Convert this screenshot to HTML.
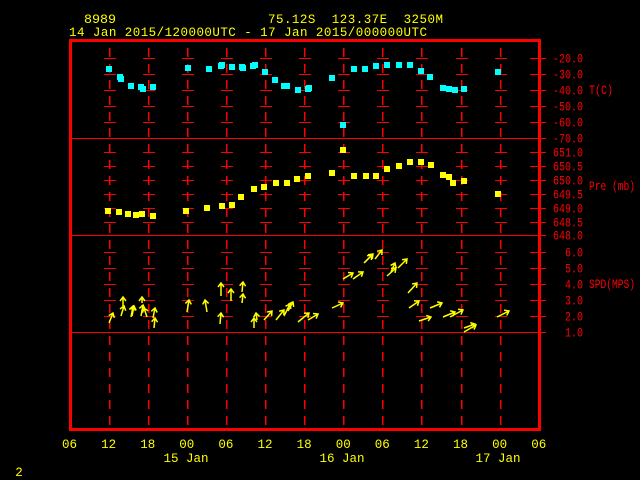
<!DOCTYPE html>
<html><head><meta charset="utf-8"><style>
html,body{margin:0;padding:0;background:#000;width:640px;height:480px;overflow:hidden}
svg{display:block}
text{font-family:"Liberation Mono",monospace}
</style></head><body>
<svg width="640" height="480" viewBox="0 0 640 480" xmlns="http://www.w3.org/2000/svg" shape-rendering="crispEdges">
<g fill="#ffff00" font-size="12.5">
<text x="84" y="23" textLength="32" lengthAdjust="spacingAndGlyphs">8989</text>
<text x="268" y="23" textLength="175" lengthAdjust="spacing" xml:space="preserve">75.12S  123.37E  3250M</text>
<text x="69" y="36" textLength="358" lengthAdjust="spacing">14 Jan 2015/120000UTC - 17 Jan 2015/000000UTC</text>
</g>
<g id="grid" stroke="#ff0000" stroke-width="1"></g>
<rect x="70.5" y="40.5" width="469" height="389" fill="none" stroke="#ff0000" stroke-width="3"/>
<g stroke="#ff0000" stroke-width="1">
<line x1="70" y1="138.5" x2="546" y2="138.5"/>
<line x1="70" y1="235.5" x2="546" y2="235.5"/>
<line x1="70" y1="332.5" x2="546" y2="332.5"/>
</g>
<g fill="#ff0000" font-size="12.5" text-anchor="end" id="lbl"></g>
<g fill="#ff0000" font-size="12.5">
<text x="589" y="94" textLength="24" lengthAdjust="spacingAndGlyphs">T(C)</text>
<text x="589" y="190" textLength="46" lengthAdjust="spacingAndGlyphs">Pre (mb)</text>
<text x="589" y="288" textLength="46" lengthAdjust="spacingAndGlyphs">SPD(MPS)</text>
</g>
<g fill="#ffff00" font-size="12.5" text-anchor="middle" id="xl"></g>
<g fill="#ffff00" font-size="12.5" text-anchor="middle">
<text x="186" y="462">15 Jan</text>
<text x="342" y="462">16 Jan</text>
<text x="498" y="462">17 Jan</text>
<text x="19" y="476">2</text>
</g>
<g id="tp" fill="#00ffff"></g>
<g id="pp" fill="#ffff00"></g>
<g id="wind" stroke="#ffff00" stroke-width="1.5" fill="none" shape-rendering="auto"></g>
</svg>
<script>
var NS="http://www.w3.org/2000/svg";
function el(p,t,a){var e=document.createElementNS(NS,t);for(var k in a)e.setAttribute(k,a[k]);document.getElementById(p).appendChild(e);return e;}
var levels=[58,74,90,106,122,138,152,166,180,194,208,222,235,252,268,284,300,316,332];
var labs=["-20.0","-30.0","-40.0","-50.0","-60.0","-70.0","651.0","650.5","650.0","649.5","649.0","648.5","648.0","6.0","5.0","4.0","3.0","2.0","1.0"];
for(var i=0;i<13;i++){
 var x=Math.round(69.5+39.1*i);
 if(i>0&&i<12){
  for(var y=48;y<424;y+=16){el("grid","rect",{x:x,y:y,width:1.5,height:9,fill:"#ff0000",stroke:"none"});}
  levels.forEach(function(l){el("grid","line",{x1:x-5,y1:l+0.5,x2:x+7,y2:l+0.5});});
 }
}
levels.forEach(function(l,j){el("grid","line",{x1:530,y1:l+0.5,x2:546,y2:l+0.5});
 var t=el("lbl","text",{x:583,y:l+4.5,textLength:labs[j].length*6,lengthAdjust:"spacingAndGlyphs"});t.textContent=labs[j];});
var xl=["06","12","18","00","06","12","18","00","06","12","18","00","06"];
xl.forEach(function(s,i){var t=el("xl","text",{x:69.5+39.1*i,y:448});t.textContent=s;});
var T=[[109,69],[120,77],[121,79],[131,86],[141,87],[143,89],[153,87],[188,68],[209,69],[221,66],[222,65],[232,67],[242,67],[243,68],[253,66],[255,65],[265,72],[275,80],[284,86],[287,86],[298,90],[308,89],[309,88],[332,78],[343,125],[354,69],[365,69],[376,66],[387,65],[399,65],[410,65],[421,71],[430,77],[443,88],[449,89],[455,90],[464,89],[498,72]];
T.forEach(function(p){el("tp","rect",{x:p[0]-3,y:p[1]-3,width:6,height:6});});
var P=[[108,211],[119,212],[128,214],[136,215],[142,214],[153,216],[186,211],[207,208],[222,206],[232,205],[241,197],[254,189],[264,187],[276,183],[287,183],[297,179],[308,176],[332,173],[343,150],[354,176],[366,176],[376,176],[387,169],[399,166],[410,162],[421,162],[431,165],[443,175],[449,177],[453,183],[464,181],[498,194]];
P.forEach(function(p){el("pp","rect",{x:p[0]-3,y:p[1]-3,width:6,height:6});});
var W=[[109,323,113,313],[121,316,124,306],[123,306,123,297],[131,317,133,306],[132,316,134,306],[141,316,143,305],[142,303,142,297],[147,317,144,308],[154,328,155,318],[153,318,155,308],[187,312,189,300],[207,312,205,300],[220,324,221,313],[221,296,221,283],[231,301,231,289],[242,303,243,294],[242,292,243,282],[254,328,254,318],[257,320,256,313],[264,320,272,311],[276,320,284,310],[284,316,290,304],[288,311,293,302],[298,322,309,313],[308,320,318,314],[332,308,343,303],[343,279,353,273],[353,279,363,272],[364,263,373,254],[365,262,372,255],[375,259,382,250],[387,276,396,268],[391,272,395,263],[398,268,407,259],[408,293,417,283],[409,308,419,301],[419,321,431,317],[430,308,442,303],[443,317,455,312],[450,317,463,310],[464,332,476,325],[464,328,475,324],[497,317,509,311]];
W.forEach(function(w){
 var dx=w[2]-w[0],dy=w[3]-w[1],L=Math.hypot(dx,dy),ux=dx/L,uy=dy/L,h=5;
 var ax=w[2]-h*(ux*0.8-uy*0.6),ay=w[3]-h*(uy*0.8+ux*0.6);
 var bx=w[2]-h*(ux*0.8+uy*0.6),by=w[3]-h*(uy*0.8-ux*0.6);
 el("wind","path",{d:"M"+w[0]+" "+w[1]+"L"+w[2]+" "+w[3]+"M"+ax+" "+ay+"L"+w[2]+" "+w[3]+"L"+bx+" "+by});
});
</script>
</body></html>
